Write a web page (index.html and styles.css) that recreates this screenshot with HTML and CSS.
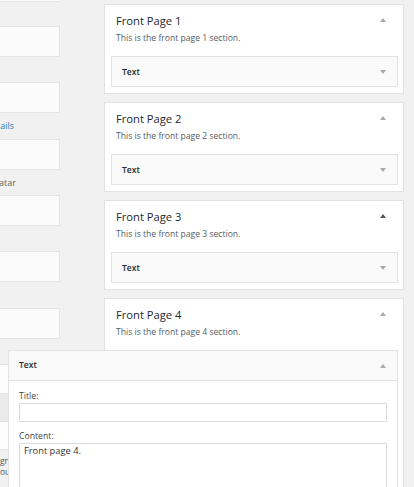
FILE: index.html
```html
<!DOCTYPE html>
<html>
<head>
<meta charset="utf-8">
<link rel="stylesheet" href="styles.css">
</head>
<body>
<div class="page">
  <div class="left">
    <div class="cap"></div>
    <div class="gap first"></div>
    <div class="box"></div>
    <div class="gap"></div>
    <div class="box"></div>
    <div class="gap"><div class="hint link">Edit details</div></div>
    <div class="box"></div>
    <div class="gap"><div class="hint wide">Gravatar</div></div>
    <div class="box"></div>
    <div class="gap"></div>
    <div class="box"></div>
    <div class="gap"></div>
    <div class="box"></div>
    <div class="gap"></div>
    <div class="box short"></div>
    <div class="band"></div>
    <div class="box plain"></div>
    <div class="note">gr<br>ou</div>
  </div>

  <div class="right">
    <div class="section">
      <div class="sec-head"><h3 class="sec-title">Front Page 1</h3><svg class="arrow" width="6" height="4" viewBox="0 0 6 4"><polygon points="0,4 3,0 6,4" fill="#a7aaad"/></svg></div>
      <p class="sec-desc">This is the front page 1 section.</p>
      <div class="widget"><span class="w-title">Text</span><svg class="arrow" width="6" height="4" viewBox="0 0 6 4"><polygon points="0,0 6,0 3,4" fill="#a7aaad"/></svg></div>
    </div>
    <div class="section">
      <div class="sec-head"><h3 class="sec-title">Front Page 2</h3><svg class="arrow" width="6" height="4" viewBox="0 0 6 4"><polygon points="0,4 3,0 6,4" fill="#a7aaad"/></svg></div>
      <p class="sec-desc">This is the front page 2 section.</p>
      <div class="widget"><span class="w-title">Text</span><svg class="arrow" width="6" height="4" viewBox="0 0 6 4"><polygon points="0,0 6,0 3,4" fill="#a7aaad"/></svg></div>
    </div>
    <div class="section">
      <div class="sec-head"><h3 class="sec-title">Front Page 3</h3><svg class="arrow" width="6" height="4" viewBox="0 0 6 4"><polygon points="0,4 3,0 6,4" fill="#50575e"/></svg></div>
      <p class="sec-desc">This is the front page 3 section.</p>
      <div class="widget"><span class="w-title">Text</span><svg class="arrow" width="6" height="4" viewBox="0 0 6 4"><polygon points="0,0 6,0 3,4" fill="#a7aaad"/></svg></div>
    </div>
    <div class="section last">
      <div class="sec-head"><h3 class="sec-title">Front Page 4</h3><svg class="arrow" width="6" height="4" viewBox="0 0 6 4"><polygon points="0,4 3,0 6,4" fill="#a7aaad"/></svg></div>
      <p class="sec-desc">This is the front page 4 section.</p>
      <div class="widget open">
        <div class="w-head"><span class="w-title">Text</span><svg class="arrow" width="6" height="4" viewBox="0 0 6 4"><polygon points="0,4 3,0 6,4" fill="#a7aaad"/></svg></div>
        <div class="w-body">
          <label class="f-label">Title:</label>
          <div class="f-input"></div>
          <label class="f-label second">Content:</label>
          <div class="f-area">Front page 4.</div>
        </div>
      </div>
    </div>
  </div>
</div>
</body>
</html>
```
FILE: styles.css
```css
html, body {
  margin: 0;
  padding: 0;
}
body {
  background: #f1f1f1;
  font-family: "Open Sans", "Noto Sans", sans-serif;
  color: #23282d;
  height: 487px;
  overflow: hidden;
}
.page {
  display: flex;
  align-items: flex-start;
  height: 487px;
  overflow: hidden;
}
.left {
  width: 60px;
  flex: none;
  display: flex;
  flex-direction: column;
}
.cap {
  height: 1px;
  background: #fbfbfb;
  border-bottom: 1px solid #e4e4e4;
}
.gap {
  height: 25.33px;
  flex: none;
}
.gap.first {
  height: 24px;
}
.box {
  height: 29px;
  flex: none;
  background: #fbfbfb;
  border: 1px solid #e4e4e4;
  border-left: none;
}
.box.short {
  height: 28px;
  background: #fdfdfd;
}
.band {
  height: 27px;
  background: #ebebeb;
  border-bottom: 1px solid #e2e2e2;
}
.box.plain {
  height: 27px;
  border-top: none;
  background: #fdfdfd;
}
.hint {
  width: 14px;
  direction: rtl;
  white-space: nowrap;
  font-size: 9px;
  line-height: 13px;
  padding-top: 6px;
  color: #666;
}
.hint.wide {
  width: 16px;
}
.hint.link {
  color: #2a7fb0;
}
.note {
  margin-top: 5px;
  font-size: 8.5px;
  line-height: 11px;
  color: #555;
  white-space: nowrap;
}
.right {
  width: 300px;
  flex: none;
  margin-left: 44px;
  padding-top: 4px;
  display: flex;
  flex-direction: column;
  gap: 8px;
}
.section {
  background: #fff;
  border: 1px solid #e2e2e2;
  padding-top: 9px;
  box-sizing: content-box;
  height: 79px;
}
.section.last {
  height: auto;
}
.sec-head {
  display: flex;
  justify-content: space-between;
  align-items: flex-start;
  padding: 0 17px 0 11px;
}
.sec-title {
  margin: 0;
  font-size: 11.2px;
  line-height: 14px;
  font-weight: 400;
  color: #23282d;
}
.arrow {
  display: block;
  flex: none;
}
.sec-head .arrow {
  margin-top: 4px;
}
.sec-desc {
  margin: 4px 0 0 11px;
  font-size: 8.6px;
  line-height: 12px;
  color: #555d66;
}
.widget {
  margin: 12px 5px 0 6px;
  height: 29px;
  background: #fafafa;
  border: 1px solid #e2e2e2;
  display: flex;
  align-items: center;
  justify-content: space-between;
  padding: 0 11px 0 10px;
}
.w-title {
  font-size: 8.5px;
  font-weight: 600;
  line-height: 29px;
  color: #23282d;
}
.widget.open {
  display: block;
  height: auto;
  padding: 0;
  margin-left: -97px;
  background: #fff;
  position: relative;
  z-index: 1;
  box-shadow: 0 1px 1px rgba(0, 0, 0, 0.04);
}
.w-head {
  height: 29px;
  background: #f9f9f9;
  border-bottom: 1px solid #e2e2e2;
  display: flex;
  align-items: center;
  justify-content: space-between;
  padding: 0 11px 0 10px;
}
.w-head .w-title {
  line-height: 27px;
  padding-bottom: 2px;
}
.w-body {
  padding: 9px 10px 20px 10px;
}
.f-label {
  display: block;
  font-size: 8.7px;
  line-height: 12px;
  color: #444;
}
.f-label.second {
  margin-top: 8px;
}
.f-input {
  margin-top: 1px;
  height: 17px;
  border: 1px solid #dcdcdc;
  background: #fff;
}
.f-area {
  margin-top: 1px;
  height: 60px;
  border: 1px solid #dcdcdc;
  padding: 1px 4px;
  font-size: 9.3px;
  line-height: 12px;
  color: #333;
}
```
